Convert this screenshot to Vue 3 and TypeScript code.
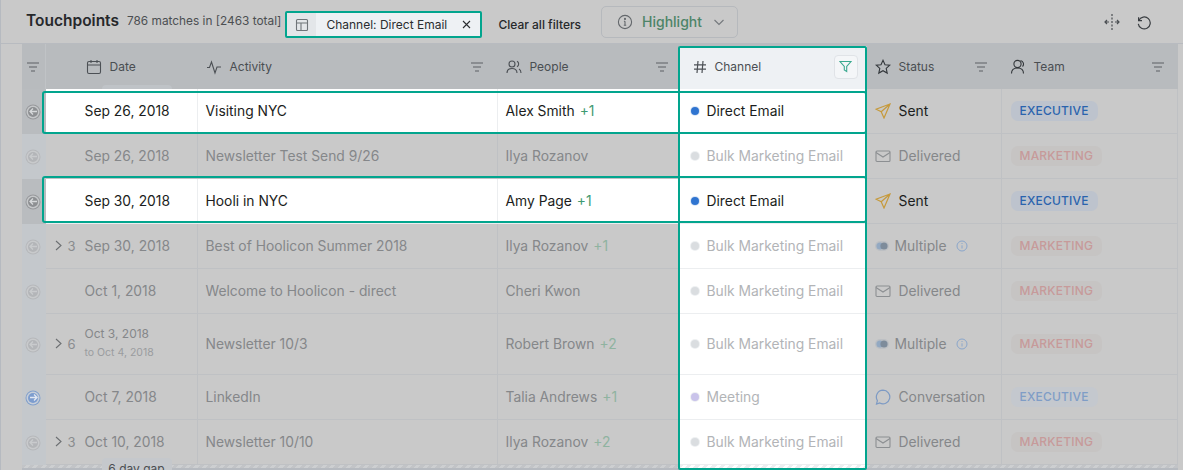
<script setup lang="ts">
interface Row {
  date: string
  sub?: string
  count?: number
  activity: string
  person: string
  plus?: number
  channel: string
  status: 'Sent' | 'Delivered' | 'Multiple' | 'Conversation'
  team: 'EXECUTIVE' | 'MARKETING'
  active?: boolean
  inbound?: boolean
  tall?: boolean
  cls?: string
}

const rows: Row[] = [
  { date: 'Sep 26, 2018', activity: 'Visiting NYC', person: 'Alex Smith', plus: 1, channel: 'Direct Email', status: 'Sent', team: 'EXECUTIVE', active: true, cls: 'first' },
  { date: 'Sep 26, 2018', activity: 'Newsletter Test Send 9/26', person: 'Ilya Rozanov', channel: 'Bulk Marketing Email', status: 'Delivered', team: 'MARKETING' },
  { date: 'Sep 30, 2018', activity: 'Hooli in NYC', person: 'Amy Page', plus: 1, channel: 'Direct Email', status: 'Sent', team: 'EXECUTIVE', active: true, cls: 'second' },
  { date: 'Sep 30, 2018', count: 3, activity: 'Best of Hoolicon Summer 2018', person: 'Ilya Rozanov', plus: 1, channel: 'Bulk Marketing Email', status: 'Multiple', team: 'MARKETING' },
  { date: 'Oct 1, 2018', activity: 'Welcome to Hoolicon - direct', person: 'Cheri Kwon', channel: 'Bulk Marketing Email', status: 'Delivered', team: 'MARKETING' },
  { date: 'Oct 3, 2018', sub: 'to Oct 4, 2018', count: 6, activity: 'Newsletter 10/3', person: 'Robert Brown', plus: 2, channel: 'Bulk Marketing Email', status: 'Multiple', team: 'MARKETING', tall: true },
  { date: 'Oct 7, 2018', activity: 'LinkedIn', person: 'Talia Andrews', plus: 1, channel: 'Meeting', status: 'Conversation', team: 'EXECUTIVE', inbound: true },
  { date: 'Oct 10, 2018', count: 3, activity: 'Newsletter 10/10', person: 'Ilya Rozanov', plus: 2, channel: 'Bulk Marketing Email', status: 'Delivered', team: 'MARKETING' },
]
</script>

<template>
  <div class="page">
    <header class="toolbar">
      <h1 class="title">Touchpoints</h1>
      <span class="matches">786 matches in [2463 total]</span>
      <div class="chip">
        <span class="chip-icon">
          <svg width="14" height="14" viewBox="0 0 14 14" fill="none" stroke="#6f7479" stroke-width="1.1"><rect x="1.5" y="1.5" width="11" height="11" rx="1"/><path d="M1.5 5h11M6 5v7.500"/></svg>
        </span>
        <span class="chip-text">Channel: Direct Email</span>
        <svg class="chip-x" width="9" height="9" viewBox="0 0 9 9" fill="none" stroke="#2a2d30" stroke-width="1.1"><path d="M1 1l7 7M8 1L1 8"/></svg>
      </div>
      <span class="clear">Clear all filters</span>
      <div class="highlight">
        <svg width="16" height="16" viewBox="0 0 16 16" fill="none" stroke="#63676b" stroke-width="1.1"><circle cx="8" cy="8" r="6.600"/><path d="M8 7.200v4M6.800 11.300h2.400M6.900 7.200H8"/><circle cx="8" cy="4.900" r=".5" fill="#63676b"/></svg>
        <span class="highlight-text">Highlight</span>
        <svg width="12" height="12" viewBox="0 0 12 12" fill="none" stroke="#74787c" stroke-width="1.1"><path d="M1.500 4l4.500 4.500L10.500 4"/></svg>
      </div>
      <div class="tools">
        <svg width="16" height="18" viewBox="0 0 16 18" fill="none" stroke="#4a4e52" stroke-width="1.2"><path d="M8 1v16" stroke-dasharray="2 1.500"/><path d="M1 9h4M3 7L1 9l2 2M15 9h-4M13 7l2 2-2 2"/></svg>
        <svg width="16" height="16" viewBox="0 0 16 16" fill="none" stroke="#3a3e42" stroke-width="1.200"><path d="M2.600 3.200v3.400H6"/><path d="M2.800 6.400A6 6 0 1 1 2.300 9.800"/></svg>
      </div>
    </header>

    <section class="table">
      <div class="grid head">
        <div class="gutter-head">
          <svg class="lines" width="14" height="10" viewBox="0 0 14 10" fill="none" stroke="#5c6065" stroke-width="1.100"><path d="M1 1h12M3 5h8M5 9h4"/></svg>
        </div>
        <div class="hc date-head">
          <svg width="16" height="16" viewBox="0 0 16 16" fill="none" stroke="#4c5055" stroke-width="1.100"><rect x="1.500" y="2.500" width="13" height="12" rx="1.500"/><path d="M1.500 6h13M5 1v3M11 1v3"/></svg>
          <span>Date</span>
        </div>
        <div class="hc">
          <svg width="16" height="16" viewBox="0 0 16 16" fill="none" stroke="#4c5055" stroke-width="1.100"><path d="M1 8.500h2.500L5.500 3l3.500 11L11 8h4"/></svg>
          <span>Activity</span>
          <svg class="lines end" width="14" height="10" viewBox="0 0 14 10" fill="none" stroke="#5c6065" stroke-width="1.100"><path d="M1 1h12M3 5h8M5 9h4"/></svg>
        </div>
        <div class="hc people-head">
          <svg width="16" height="16" viewBox="0 0 16 16" fill="none" stroke="#4c5055" stroke-width="1.100"><circle cx="6" cy="5" r="3"/><path d="M1 14c0-3 2-4.500 5-4.500s5 1.500 5 4.500M11 2.300a3 3 0 0 1 0 5.400M13 10c1.300.7 2 2 2 4"/></svg>
          <span>People</span>
          <svg class="lines end" width="14" height="10" viewBox="0 0 14 10" fill="none" stroke="#5c6065" stroke-width="1.100"><path d="M1 1h12M3 5h8M5 9h4"/></svg>
        </div>
        <div class="hc channel-head">
          <svg width="14" height="14" viewBox="0 0 14 14" fill="none" stroke="#4c5055" stroke-width="1.200"><path d="M5 1L4 13M10 1L9 13M1 4.800h12M1 9.200h12"/></svg>
          <span>Channel</span>
          <span class="filter-btn">
            <svg width="13" height="13" viewBox="0 0 13 13" fill="none" stroke="#3aa98f" stroke-width="1.100"><path d="M1 1.500h11L7.700 6.500v5L5.300 10V6.500z"/></svg>
          </span>
        </div>
        <div class="hc status-head">
          <svg width="16" height="16" viewBox="0 0 16 16" fill="none" stroke="#33373b" stroke-width="1.100"><path d="M8 1.300l2 4.400 4.800.5-3.600 3.200 1 4.700L8 11.700l-4.200 2.400 1-4.700L1.200 6.200 6 5.700z"/></svg>
          <span>Status</span>
          <svg class="lines end" width="14" height="10" viewBox="0 0 14 10" fill="none" stroke="#5c6065" stroke-width="1.100"><path d="M1 1h12M3 5h8M5 9h4"/></svg>
        </div>
        <div class="hc team-head">
          <svg width="16" height="16" viewBox="0 0 16 16" fill="none" stroke="#33373b" stroke-width="1.100"><circle cx="7.500" cy="5" r="3.600"/><path d="M1.500 14.500c0-3.500 2.500-5.500 6-5.500s6 2 6 5.500M10.500 1.500a3.600 3.600 0 0 1 2 6"/></svg>
          <span>Team</span>
          <svg class="lines end" width="14" height="10" viewBox="0 0 14 10" fill="none" stroke="#5c6065" stroke-width="1.100"><path d="M1 1h12M3 5h8M5 9h4"/></svg>
        </div>
        <span class="gap-pill top-pill">1 day gap</span>
      </div>

      <div
        v-for="(r, i) in rows"
        :key="i"
        class="grid row"
        :class="[{ active: r.active, tall: r.tall }, r.cls]"
      >
        <div class="gutter">
          <span class="dir" :class="{ inbound: r.inbound }">
            <svg width="9" height="9" viewBox="0 0 9 9" fill="none" stroke="currentColor" stroke-width="1.300">
              <path v-if="r.inbound" d="M1 4.500h7M5 1.500l3 3-3 3"/>
              <path v-else d="M8 4.500H1M4 1.500l-3 3 3 3"/>
            </svg>
          </span>
        </div>
        <div class="cell date">
          <span class="expander">
            <template v-if="r.count">
              <svg width="7" height="11" viewBox="0 0 7 11" fill="none" stroke="#6c6f72" stroke-width="1.100"><path d="M1 1l5 4.500L1 10"/></svg>
              <span class="count">{{ r.count }}</span>
            </template>
          </span>
          <span class="date-text">
            <span class="date-main">{{ r.date }}</span>
            <span v-if="r.sub" class="date-sub">{{ r.sub }}</span>
          </span>
        </div>
        <div class="cell activity">{{ r.activity }}</div>
        <div class="cell people">{{ r.person }}<span v-if="r.plus" class="plus">+{{ r.plus }}</span></div>
        <div class="cell channel">
          <span class="dot" :class="{ blue: r.channel === 'Direct Email', purple: r.channel === 'Meeting' }"></span>
          {{ r.channel }}
        </div>
        <div class="cell status" :class="{ multi: r.status === 'Multiple' }">
          <svg v-if="r.status === 'Sent'" width="16" height="16" viewBox="0 0 16 16" fill="none" stroke="#c69a3c" stroke-width="1.200"><path d="M15 1L1 6.200l5.200 2.600L9 15zM15 1L6.200 8.800"/></svg>
          <svg v-else-if="r.status === 'Delivered'" width="16" height="16" viewBox="0 0 16 16" fill="none" stroke="#8c8f92" stroke-width="1.100"><rect x="1" y="3" width="14" height="10.500" rx="1"/><path d="M1 4.500l7 4.500 7-4.500"/></svg>
          <svg v-else-if="r.status === 'Multiple'" width="14" height="12" viewBox="0 0 14 12"><rect x="0" y="1" width="14" height="10" rx="5" fill="#bcbfc3"/><circle cx="5" cy="6" r="3.600" fill="#93a9c2"/><circle cx="9" cy="6" r="3.600" fill="#7e8c9b"/></svg>
          <svg v-else width="16" height="16" viewBox="0 0 16 16" fill="none" stroke="#7d9ac4" stroke-width="1.200"><path d="M8 1.200a6.800 6.800 0 1 1-3.200 12.800L1.500 15l.9-3.400A6.800 6.800 0 0 1 8 1.200z"/></svg>
          <span>{{ r.status }}</span>
          <svg v-if="r.status === 'Multiple'" class="info" width="12" height="12" viewBox="0 0 12 12" fill="none" stroke="#8aa6cb" stroke-width="1"><circle cx="6" cy="6" r="5"/><path d="M6 5.300v3.200M6 3v1"/></svg>
        </div>
        <div class="cell team">
          <span class="pill" :class="r.team === 'EXECUTIVE' ? (r.active ? 'exec' : 'exec-dim') : 'mkt'">{{ r.team }}</span>
        </div>
      </div>

      <div class="hatch">
        <span class="hatch-channel"></span>
        <span class="gap-pill">6 day gap</span>
      </div>
      <div class="channel-frame"></div>
    </section>
  </div>
</template>

<style scoped>
.page {
  width: 1183px;
  height: 470px;
  overflow: hidden;
  box-sizing: border-box;
  background: #c9c9c9;
  font-family: Inter, "Liberation Sans", sans-serif;
  color: #1b1d20;
  border-left: 1.500px solid #b6bac0;
  position: relative;
}
.toolbar {
  height: 44px;
  box-sizing: border-box;
  display: flex;
  align-items: center;
  padding: 0 31px 0 25px;
  border-bottom: 1px solid #b8bbc0;
}
.title {
  margin: 0 0 2px;
  font-size: 15.500px;
  font-weight: 600;
  color: #26282b;
}
.matches {
  margin: 0 4px 2px 8px;
  font-size: 11.850px;
  color: #4c4f52;
}
.chip {
  width: 197px;
  height: 27px;
  margin-top: 6px;
  box-sizing: border-box;
  display: flex;
  align-items: center;
  border: 2px solid #02a58e;
  border-radius: 2px;
  background: #eef1f4;
}
.chip-icon {
  width: 29px;
  height: 100%;
  display: flex;
  align-items: center;
  justify-content: center;
  background: #e3e6e9;
}
.chip-text {
  margin-left: 10px;
  font-size: 12px;
  color: #2a2d30;
}
.chip-x { margin-left: 15px; }
.clear {
  margin: 6px 0 0 16px;
  font-size: 12px;
  font-weight: 500;
  color: #26282b;
}
.highlight {
  margin-left: 20px;
  width: 137px;
  height: 32px;
  box-sizing: border-box;
  display: flex;
  align-items: center;
  padding-left: 15px;
  border: 1px solid #b6b9bd;
  border-radius: 5px;
}
.highlight-text {
  margin: 0 11px 0 9px;
  font-size: 14px;
  font-weight: 500;
  color: #4d8468;
}
.tools {
  margin-left: auto;
  display: flex;
  align-items: center;
  gap: 16px;
}
.table {
  position: relative;
  margin-left: 20.500px;
  width: 1156px;
}
.grid {
  display: grid;
  grid-template-columns: 24px 152px 300px 181px 188px 135px 176px;
}
.head {
  position: relative;
  height: 45px;
  background: #b8bbbe;
  font-size: 12px;
  color: #4a4e52;
}
.gutter-head {
  display: flex;
  align-items: center;
  justify-content: center;
  border-right: 1px solid #c0c3c6;
}
.hc {
  display: flex;
  align-items: center;
  gap: 8px;
  padding-left: 8px;
  padding-right: 14px;
}
.date-head { padding-left: 40px; }
.lines.end { margin-left: auto; }
.people-head { padding-right: 10px; }
.team-head { padding-right: 13px; }
.channel-head {
  position: relative;
  z-index: 1;
  background: #eef1f4;
  padding: 0 9px 3px 14px;
  margin-top: 2px;
  margin-bottom: -1px;
}
.channel-head .filter-btn {
  margin-left: auto;
  width: 24px;
  height: 24px;
  box-sizing: border-box;
  display: flex;
  align-items: center;
  justify-content: center;
  background: #f4f6f8;
  border: 1px solid #e0e3e7;
  border-radius: 4px;
}
.status-head { padding-left: 8px; }
.row {
  position: relative;
  height: 45px;
  box-sizing: border-box;
  font-size: 13.850px;
  color: #85878a;
}
.row.tall { height: 61px; }
.row.active { color: #1b1d20; z-index: 2; }
.row.active::after {
  content: "";
  position: absolute;
  left: 20px;
  width: 825px;
  border: 2px solid #02a58e;
  border-radius: 3px;
  box-sizing: border-box;
  pointer-events: none;
}
.row.first::after { top: 2px; bottom: 0; }
.row.second::after { top: -3px; bottom: 1px; }
.gutter {
  display: flex;
  align-items: center;
  justify-content: center;
  background: #c4c8cc;
  border-right: 1px solid #c4c8cc;
}
.row.active .gutter { background: #b9bcbf; border-right-color: #b9bcbf; }
.dir {
  width: 10px;
  height: 10px;
  display: flex;
  align-items: center;
  justify-content: center;
  border-radius: 50%;
  color: #c9cbcd;
  background: #b3b5b8;
  box-shadow: 0 0 0 1.500px #c8cacc, 0 0 0 2.500px #b6b8bb;
}
.row.active .dir {
  background: #8d8f92;
  color: #d7d9db;
  box-shadow: 0 0 0 1.500px #c5c7c9, 0 0 0 2.500px #97999c;
}
.dir.inbound {
  background: #7d9dce;
  color: #e2e8f2;
  box-shadow: 0 0 0 1.500px #c8cfd9, 0 0 0 2.500px #82a0cc;
}
.dir svg { flex: none; }
.cell {
  display: flex;
  align-items: center;
  padding-bottom: 1px;
  border-bottom: 1px solid #bfc1c4;
  border-right: 1px solid #bfc1c4;
  white-space: nowrap;
  box-sizing: border-box;
  min-width: 0;
}
.row.active .cell:not(.status):not(.team) {
  background: #fff;
  border-color: #eceef0;
}
.date {
  padding-left: 9px;
  border-right: 1px solid #bfc1c4;
}
.expander {
  width: 30px;
  display: flex;
  align-items: center;
  gap: 6px;
  flex: none;
}
.count { font-size: 13px; color: #8a8c8f; }
.date-text {
  display: flex;
  flex-direction: column;
  gap: 3px;
  margin-top: 2px;
}
.date-main { line-height: 17px; }
.tall .date-main { font-size: 12px; }
.tall .date-text { margin: 0 0 2px; }
.date-sub { font-size: 10.500px; color: #9a9c9f; line-height: 15px; }
.activity, .people { padding-left: 8px; }
.plus { margin-left: 5px; color: #8fb3a0; }
.active .plus { color: #3f9a72; }
.cell.channel {
  background: #fff;
  color: #b2b4b7;
  padding-left: 12px;
  gap: 8px;
  border-bottom-color: #eceef0;
  border-right-color: transparent;
}
.row.active .cell.channel { color: #1b1d20; }
.dot {
  width: 8px;
  height: 8px;
  border-radius: 50%;
  background: #dadde0;
  box-shadow: 0 0 0 1px #eef0f2;
  flex: none;
}
.dot.blue { background: #2f74d0; box-shadow: 0 0 0 1px #dbe7f6; }
.dot.purple { background: #c9c3ea; }
.status {
  padding-left: 8px;
  gap: 8px;
}
.status.multi { gap: 6px; }
.info { margin-left: 3px; }
.team { padding-left: 9px; }
.pill {
  height: 20px;
  line-height: 20px;
  padding: 0 9px;
  border-radius: 7px;
  font-size: 12px;
  font-weight: 500;
  letter-spacing: .2px;
}
.exec { background: #bdc3cd; color: #2a63ad; }
.exec-dim { background: #c4c8ce; color: #7f9dc6; }
.mkt { background: #c6c4c3; color: #c79a9a; }
.hatch {
  position: relative;
  height: 3px;
  border-bottom: 2px solid #b6bac0;
  background: repeating-linear-gradient(135deg, #c2c4c7 0 3px, #cdcfd1 3px 6px);
}
.hatch-channel {
  position: absolute;
  left: 657px;
  top: 0;
  width: 188px;
  height: 3px;
  background: repeating-linear-gradient(135deg, #eceef0 0 3px, #fff 3px 6px);
}
.gap-pill {
  position: absolute;
  left: 80px;
  width: 70px;
  height: 20px;
  box-sizing: border-box;
  text-align: center;
  background: #c5c8cc;
  border-radius: 4px;
  font-size: 12px;
  color: #4a4e52;
}
.hatch .gap-pill { top: -7px; padding-top: 3px; }
.top-pill {
  top: 41px;
  height: 20px;
  padding-top: 2px;
  background: #bfc3c7;
}
.channel-frame {
  position: absolute;
  z-index: 3;
  left: 656px;
  top: 2px;
  width: 189px;
  height: 424px;
  box-sizing: border-box;
  border: 2px solid #02a58e;
  border-radius: 2px;
  pointer-events: none;
}
</style>

<style>
html, body { margin: 0; background: #c9c9c9; }
</style>
